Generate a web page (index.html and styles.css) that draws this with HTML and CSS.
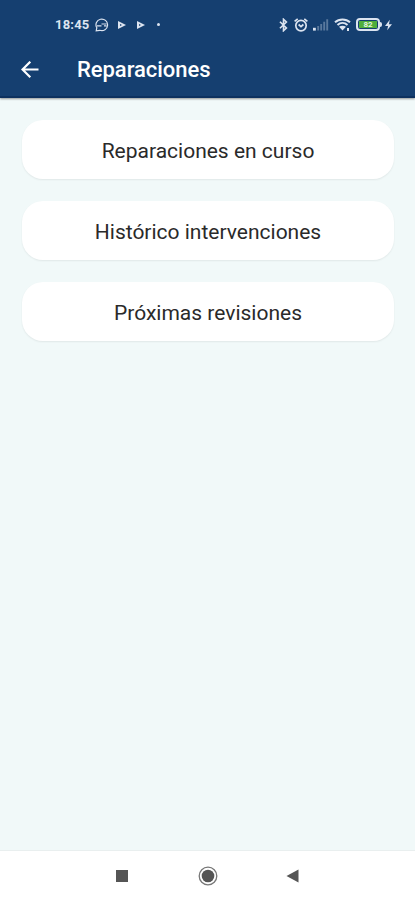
FILE: index.html
```
<!DOCTYPE html>
<html lang="es">
<head>
  <meta charset="utf-8">
  <meta name="viewport" content="width=device-width, initial-scale=1">
  <title>Reparaciones</title>
  <link rel="stylesheet" href="styles.css">
</head>
<body>

<header>
  <div class="status-bar">
    <div class="status-left">
      <span class="clock">18:45</span>
      <svg class="chat" width="14" height="14" viewBox="0 0 14 14" fill="none" stroke="currentColor" stroke-width="1.2">
        <path d="M1.200 12.800l.6-3A5.800 5.800 0 1 1 4.800 12.300zM2 7.800h4.500M6.500 6h5M9 7.800h2.500"/>
      </svg>
      <svg class="play" width="8" height="8" viewBox="0 0 8 8"><path fill="currentColor" fill-rule="evenodd" d="M0 0l8 4-8 4zM2 3v2l2-1z"/></svg>
      <svg class="play" width="8" height="8" viewBox="0 0 8 8"><path fill="currentColor" fill-rule="evenodd" d="M0 0l8 4-8 4zM2 3v2l2-1z"/></svg>
      <span class="dot"></span>
    </div>
    <div class="status-right">
      <svg width="9" height="14" viewBox="0 0 8 13" fill="none" stroke="currentColor" stroke-width="1.5">
        <path d="M.7 3.500l6 5.800L4 11.800V1.200l2.700 2.500-6 5.800"/>
      </svg>
      <svg class="alarm" width="14" height="14" viewBox="0 0 14 14" fill="none" stroke="currentColor" stroke-width="1.700">
        <circle cx="7" cy="7.600" r="5.200"/>
        <path d="M.6 3.300L3.700.9M13.400 3.300L10.300.9M4.600 6.500L7 8.600l2.400-2.100"/>
      </svg>
      <svg class="signal" width="16" height="13" viewBox="0 0 17 13" fill="currentColor">
        <path d="M0 10h3v3H0z"/>
        <path opacity=".35" d="M4.500 8h2v5h-2zM7.700 6h2v7h-2zM10.900 3.500h2V13h-2zM14.100 1h2v12h-2z"/>
      </svg>
      <svg class="wifi" width="17" height="13" viewBox="0 0 17 13" fill="none" stroke="currentColor" stroke-width="2">
        <path d="M1 4.300c4-3.700 11-3.700 15 0M3.500 7c3-2.600 7-2.600 10 0"/>
        <path fill="currentColor" stroke="none" d="M5 8.800c2-1.500 5-1.500 7 0L8.500 12.500zM13 10h2v3h-2z"/>
      </svg>
      <span class="battery"><span class="level">82</span></span>
      <svg class="bolt" width="7" height="12" viewBox="0 0 8 12"><path fill="currentColor" d="M5.500 0L0 7h3.500L2.500 12 8 5H4.500z"/></svg>
    </div>
  </div>
  <div class="toolbar">
    <svg class="back" width="18" height="18" viewBox="0 0 18 18" fill="none" stroke="currentColor" stroke-width="2.200">
      <path d="M17.500 8.500H1.500M9.300.7L1.500 8.500l7.800 7.800"/>
    </svg>
    <h1>Reparaciones</h1>
  </div>
</header>

<main>
  <button class="card">Reparaciones en curso</button>
  <button class="card">Histórico intervenciones</button>
  <button class="card">Próximas revisiones</button>
</main>

<!-- Android navigation -->
<nav>
  <svg width="20" height="20" viewBox="0 0 20 20"><path fill="#555" d="M4 4h12v12H4z"/></svg>
  <svg width="20" height="20" viewBox="0 0 20 20">
    <circle cx="10" cy="10" r="8.800" fill="none" stroke="#777" stroke-width="1.300"/>
    <circle cx="10" cy="10" r="6.300" fill="#555"/>
  </svg>
  <svg width="20" height="20" viewBox="0 0 20 20"><path fill="#555" d="M15.500 3.500v13L3.500 10z"/></svg>
</nav>

</body>
</html>
```
FILE: styles.css
```
body {
  font-family: Roboto, sans-serif;
  margin: 0;
  height: 900px;
  display: flex;
  flex-direction: column;
  background-color: #f1f9f9;
}

header {
  box-sizing: border-box;
  height: 98px;
  background-color: #153f70;
  border-bottom: 2px solid #0d315f;
  box-shadow: 0 1px 2px rgba(0, 0, 0, 0.4);
  color: #fff;
}

.status-bar {
  height: 49px;
  padding: 0 23px 0 55px;
  display: flex;
  justify-content: space-between;
  align-items: center;
  color: #dce4f0;
}

.status-left,
.status-right {
  display: flex;
  align-items: center;
}

.clock {
  font-size: 13px;
  font-weight: 700;
  width: 40px;
  letter-spacing: 0.2px;
}

.play {
  margin-left: 9px;
}

.play + .play {
  margin-left: 11px;
}

.dot {
  width: 3px;
  height: 3px;
  margin-left: 12px;
  border-radius: 50%;
  background-color: #dce4f0;
}

.alarm {
  margin-left: 6px;
}

.signal {
  margin-left: 5px;
}

.wifi {
  margin-left: 5px;
}

.battery {
  position: relative;
  box-sizing: border-box;
  width: 24px;
  height: 13px;
  margin: 0 5px 0 5px;
  padding: 1px;
  border: 2px solid #dce4f0;
  border-radius: 4px;
}

/* battery tip */
.battery::after {
  content: '';
  position: absolute;
  top: 2px;
  right: -4px;
  width: 2px;
  height: 5px;
  border-radius: 0 2px 2px 0;
  background-color: #dce4f0;
}

.level {
  display: block;
  width: 18px;
  height: 7px;
  background-color: #4fae3c;
  font-size: 8px;
  font-weight: 700;
  line-height: 8px;
  text-align: center;
  color: #e4f5df;
}

.toolbar {
  height: 42px;
  padding-left: 21px;
  display: flex;
  align-items: center;
}

h1 {
  margin: 0 0 0 38px;
  font-size: 22px;
  font-weight: 500;
  line-height: 26px;
  letter-spacing: -0.05px;
}

main {
  flex: 1;
  padding: 22px 21px 0 22px;
  display: flex;
  flex-direction: column;
  gap: 22px;
}

.card {
  height: 59px;
  padding: 2px 0 0;
  border: none;
  border-radius: 21px;
  background-color: #fff;
  box-shadow: 0 1px 2px rgba(0, 0, 0, 0.07);
  font-family: inherit;
  font-size: 21px;
  color: #2a2a2a;
}

nav {
  box-sizing: border-box;
  height: 50px;
  padding: 0 112px;
  display: flex;
  justify-content: space-between;
  align-items: center;
  background-color: #fff;
  border-top: 1px solid #e9efef;
}
```
